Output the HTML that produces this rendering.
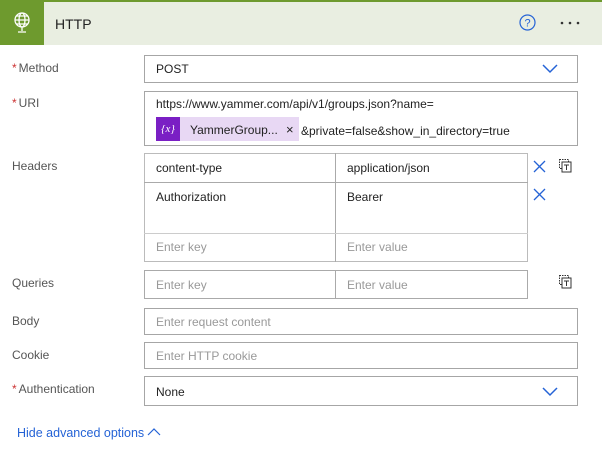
<!DOCTYPE html><html><head><style>
body{margin:0;width:602px;height:463px;background:#fff;font-family:"Liberation Sans",sans-serif;font-size:12px;color:#222;position:relative;overflow:hidden}
.a{position:absolute}
.box{position:absolute;border:1px solid #a6a6a6;box-sizing:border-box;background:#fff}
.lbl{position:absolute;left:12px;color:#555;font-size:12px}
.req{color:#c33;margin-right:2px}
.ph{color:#999}
.t{position:absolute;white-space:nowrap}
</style></head><body>
<div class="a" style="left:0;top:0;width:602px;height:2px;background:#6e9a2e"></div>
<div class="a" style="left:0;top:2px;width:602px;height:43px;background:#e9eee1"></div>
<div class="a" style="left:0;top:2px;width:44px;height:43px;background:#6e9a2e"></div>
<svg class="a" style="left:12px;top:11px" width="20" height="24" viewBox="0 0 20 24" fill="none" stroke="#fff" stroke-width="1.3"><circle cx="10" cy="9" r="7"/><ellipse cx="10" cy="9" rx="3" ry="7"/><path d="M3 9h14M4.5 5h11M4.5 13h11M10 16v4M6 21h8"/></svg>
<div class="t" style="left:55px;top:16px;font-size:14px;color:#222">HTTP</div>
<svg class="a" style="left:519px;top:14px" width="17" height="17" viewBox="0 0 17 17"><circle cx="8.5" cy="8.5" r="7.5" fill="none" stroke="#2563d6" stroke-width="1.2"/><text x="8.5" y="12.5" font-size="11" text-anchor="middle" fill="#2563d6" font-family="Liberation Sans">?</text></svg>
<svg class="a" style="left:560px;top:21px" width="24" height="4"><circle cx="2" cy="2" r="1.3" fill="#333"/><circle cx="10" cy="2" r="1.3" fill="#333"/><circle cx="18" cy="2" r="1.3" fill="#333"/></svg>

<div class="lbl" style="top:61px"><span class="req">*</span>Method</div>
<div class="box" style="left:144px;top:55px;width:434px;height:28px"></div>
<div class="t" style="left:156px;top:62px">POST</div>
<svg class="a" style="left:542px;top:64px" width="16" height="10"><path d="M1 1l7 7 7-7" fill="none" stroke="#2563d6" stroke-width="1.5"/></svg>

<div class="lbl" style="top:96px"><span class="req">*</span>URI</div>
<div class="box" style="left:144px;top:91px;width:434px;height:55px"></div>
<div class="t" style="left:156px;top:97px">https://www.yammer.com/api/v1/groups.json?name=</div>
<div class="a" style="left:156px;top:117px;width:143px;height:24px;background:#e8d8f4"></div>
<div class="a" style="left:156px;top:117px;width:24px;height:24px;background:#7a1fc4;color:#fff;font-size:11px;text-align:center;line-height:24px;font-style:italic;font-family:'Liberation Serif',serif">{x}</div>
<div class="t" style="left:190px;top:123px">YammerGroup...</div>
<div class="t" style="left:286px;top:122px;font-size:13px">×</div>
<div class="t" style="left:301px;top:124px">&amp;private=false&amp;show_in_directory=true</div>

<div class="lbl" style="top:159px">Headers</div>
<div class="box" style="left:144px;top:153px;width:384px;height:109px;border-color:#bbb"></div>
<div class="a" style="left:335px;top:153px;width:1px;height:109px;background:#aaa"></div>
<div class="a" style="left:144px;top:182px;width:384px;height:1px;background:#aaa"></div>
<div class="a" style="left:144px;top:233px;width:384px;height:1px;background:#ccc"></div>
<div class="t" style="left:156px;top:161px">content-type</div>
<div class="t" style="left:347px;top:161px">application/json</div>
<div class="t" style="left:156px;top:190px">Authorization</div>
<div class="t" style="left:347px;top:190px">Bearer</div>
<div class="t ph" style="left:156px;top:240px">Enter key</div>
<div class="t ph" style="left:347px;top:240px">Enter value</div>
<svg class="a" style="left:533px;top:160px" width="13" height="13"><path d="M1 1l11 11M12 1L1 12" stroke="#2563d6" stroke-width="1.3"/></svg>
<svg class="a" style="left:533px;top:188px" width="13" height="13"><path d="M1 1l11 11M12 1L1 12" stroke="#2563d6" stroke-width="1.3"/></svg>
<svg class="a" style="left:558px;top:158px" width="14" height="15"><rect x="1.5" y="1.5" width="9" height="9" fill="none" stroke="#333" stroke-dasharray="1.5 1"/><rect x="4" y="4" width="9" height="10" fill="#fff" stroke="#333"/><path d="M6 7h5M8.5 7v5" stroke="#333"/></svg>

<div class="lbl" style="top:276px">Queries</div>
<div class="box" style="left:144px;top:270px;width:384px;height:29px;border-color:#aaa"></div>
<div class="a" style="left:335px;top:270px;width:1px;height:29px;background:#aaa"></div>
<div class="t ph" style="left:156px;top:278px">Enter key</div>
<div class="t ph" style="left:347px;top:278px">Enter value</div>
<svg class="a" style="left:558px;top:274px" width="14" height="15"><rect x="1.5" y="1.5" width="9" height="9" fill="none" stroke="#333" stroke-dasharray="1.5 1"/><rect x="4" y="4" width="9" height="10" fill="#fff" stroke="#333"/><path d="M6 7h5M8.5 7v5" stroke="#333"/></svg>

<div class="lbl" style="top:314px">Body</div>
<div class="box" style="left:144px;top:308px;width:434px;height:27px"></div>
<div class="t ph" style="left:156px;top:315px">Enter request content</div>
<div class="lbl" style="top:348px">Cookie</div>
<div class="box" style="left:144px;top:342px;width:434px;height:27px"></div>
<div class="t ph" style="left:156px;top:349px">Enter HTTP cookie</div>

<div class="lbl" style="top:382px"><span class="req">*</span>Authentication</div>
<div class="box" style="left:144px;top:376px;width:434px;height:30px"></div>
<div class="t" style="left:156px;top:385px">None</div>
<svg class="a" style="left:542px;top:387px" width="16" height="10"><path d="M1 1l7 7 7-7" fill="none" stroke="#2563d6" stroke-width="1.5"/></svg>

<div class="t" style="left:17px;top:426px;color:#2563d6;font-size:12.5px">Hide advanced options</div>
<svg class="a" style="left:147px;top:428px" width="14" height="9"><path d="M1 7l6-6 6 6" fill="none" stroke="#2563d6" stroke-width="1.2"/></svg>
</body></html>
